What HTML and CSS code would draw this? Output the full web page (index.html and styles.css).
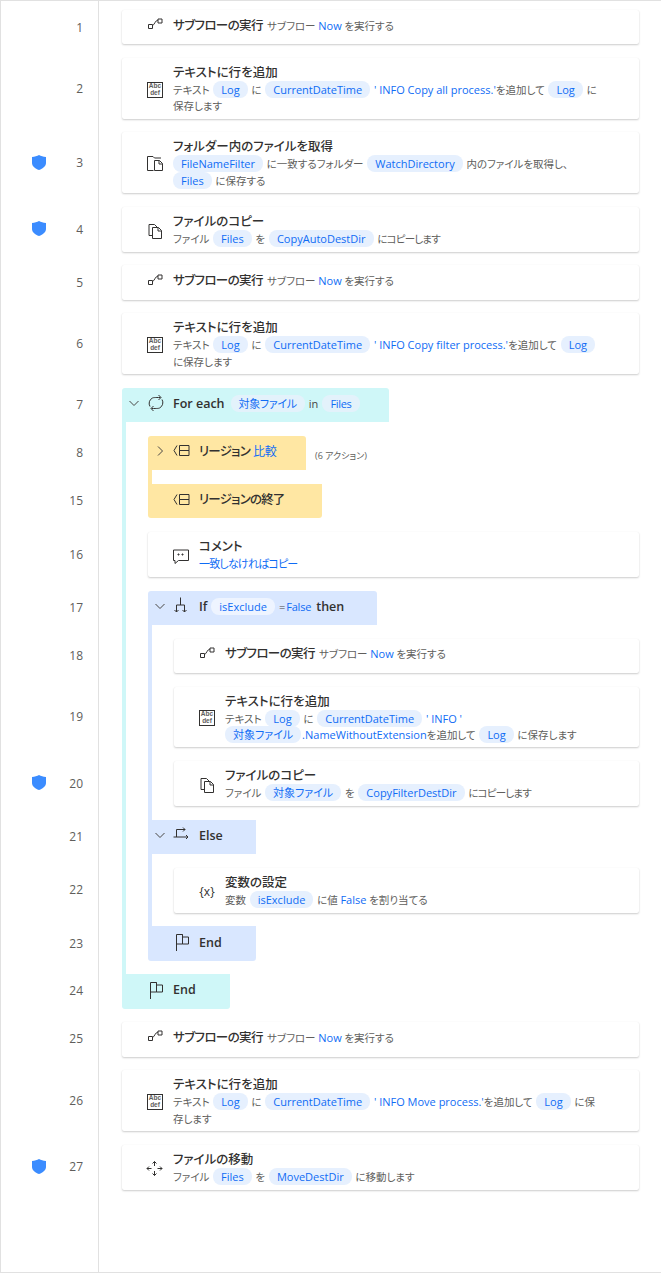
FILE: index.html
```html
<!DOCTYPE html>
<html lang="ja">
<head>
<meta charset="utf-8">
<title>Flow</title>
<link rel="stylesheet" href="styles.css">
</head>
<body>
<svg class="defs" aria-hidden="true">
  <symbol id="i-sub" viewBox="0 0 18 18"><path d="M2.500 9.500h4v4h-4zM12 4h4v4h-4zM6.500 10.500C8.500 10 9 5.500 12 5"/></symbol>
  <symbol id="i-folder" viewBox="0 0 18 18"><path d="M7.500 15.500H1.500V1.500H7L8.500 3H15M8.500 15.500V5.500h5l3 3v7zM13 5.500V9h3.500"/></symbol>
  <symbol id="i-copy" viewBox="0 0 18 18"><path d="M6.500 16.500h9v-8l-3-3h-6zM12 5.500V9h3.500M6.500 13.500H3v-11h5.500l3 3"/></symbol>
  <symbol id="i-loop" viewBox="0 0 18 18"><path d="M3 12.500a6 6 0 0 1 2.500-8.500c1-.5 2-.5 8-.5M11.500 1L14 3.500L11.500 6M15 5.500a6 6 0 0 1-2.500 8.500c-1 .5-2 .5-8 .5M6.500 12L4 14.500L6.500 17"/></symbol>
  <symbol id="i-region" viewBox="0 0 18 18"><path d="M4 3.500L1 8.500l3 5M6.500 3.500h9.500v5h-9.500zM6.500 8.500h9.500v5h-9.500z"/></symbol>
  <symbol id="i-comment" viewBox="0 0 18 18"><path d="M1.500 3h15v10.500h-10l-3.500 3v-3H1.500zM6 7h1v1H6zM10 7h1v1h-1z"/></symbol>
  <symbol id="i-if" viewBox="0 0 18 18"><path d="M7.500 .5V8M3.500 15V8h8v7M1.500 13l2 2l2-2M9.500 13l2 2l2-2"/></symbol>
  <symbol id="i-else" viewBox="0 0 18 18"><path d="M.5 11H15M13 9l2 2l-2 2M3.500 11V3.500H12M10 1.500l2 2l-2 2"/></symbol>
  <symbol id="i-end" viewBox="0 0 18 18"><path d="M3.500 18V1.500h6v2.500h6v7h-6M9.500 1.500v9.500h-6"/></symbol>
  <symbol id="i-move" viewBox="0 0 18 18"><path d="M8.500 1.500V6M6.500 3.500l2-2l2 2M8.500 11v4.500M6.500 13.500l2 2l2-2M1 8.500h4.500M3 6.500l-2 2l2 2M11.500 8.500H16M14 6.500l2 2l-2 2"/></symbol>
  <symbol id="i-shield" viewBox="0 0 14 15"><path d="M7 0c2 1.200 4.200 1.800 7 2v6c0 3-3 5.500-7 7c-4-1.500-7-4-7-7V2c2.800-.2 5-.8 7-2z"/></symbol>
  <symbol id="i-down" viewBox="0 0 12 12"><path d="M1.500 4L6 8.500L10.500 4"/></symbol>
  <symbol id="i-right" viewBox="0 0 12 12"><path d="M4 1.500L8.500 6L4 10.500"/></symbol>
</svg>

<div class="page">
  <aside class="gutter">
    <div class="cell">1</div>
    <div class="cell tall">2</div>
    <div class="cell tall"><svg class="shield"><use href="#i-shield"/></svg>3</div>
    <div class="cell mid"><svg class="shield"><use href="#i-shield"/></svg>4</div>
    <div class="cell">5</div>
    <div class="cell tall">6</div>
    <div class="cell">7</div>
    <div class="cell">8</div>
    <div class="cell">15</div>
    <div class="cell mid">16</div>
    <div class="cell">17</div>
    <div class="cell">18</div>
    <div class="cell tall">19</div>
    <div class="cell mid"><svg class="shield"><use href="#i-shield"/></svg>20</div>
    <div class="cell">21</div>
    <div class="cell mid">22</div>
    <div class="cell">23</div>
    <div class="cell">24</div>
    <div class="cell">25</div>
    <div class="cell tall">26</div>
    <div class="cell mid"><svg class="shield"><use href="#i-shield"/></svg>27</div>
  </aside>

  <main class="flow root">
    <div class="card one"><svg class="icon"><use href="#i-sub"/></svg><div class="line"><b class="title">サブフローの実行</b> <span class="desc">サブフロー <a>Now</a> を実行する</span></div></div>

    <div class="card"><div class="abc">Abc<br>def</div><div class="text"><div class="title">テキストに行を追加</div><div class="desc">テキスト <i>Log</i> に <i>CurrentDateTime</i> <a>' INFO Copy all process.'</a>を追加して <i>Log</i> に<br>保存します</div></div></div>

    <div class="card"><svg class="icon"><use href="#i-folder"/></svg><div class="text"><div class="title">フォルダー内のファイルを取得</div><div class="desc"><i class="first">FileNameFilter</i> に一致するフォルダー <i>WatchDirectory</i> 内のファイルを取得し、<br><i class="first">Files</i> に保存する</div></div></div>

    <div class="card mid"><svg class="icon"><use href="#i-copy"/></svg><div class="text"><div class="title">ファイルのコピー</div><div class="desc">ファイル <i>Files</i> を <i>CopyAutoDestDir</i> <span class="tight">にコピーします</span></div></div></div>

    <div class="card one"><svg class="icon"><use href="#i-sub"/></svg><div class="line"><b class="title">サブフローの実行</b> <span class="desc">サブフロー <a>Now</a> を実行する</span></div></div>

    <div class="card"><div class="abc">Abc<br>def</div><div class="text"><div class="title">テキストに行を追加</div><div class="desc">テキスト <i>Log</i> に <i>CurrentDateTime</i> <a>' INFO Copy filter process.'</a>を追加して <i>Log</i><br>に保存します</div></div></div>

    <section class="block cyan">
      <header class="head top w-foreach"><svg class="chev"><use href="#i-down"/></svg><svg class="icon"><use href="#i-loop"/></svg><b class="title">For each</b> <i class="alt">対象ファイル</i> <span class="plain">in</span> <i class="alt">Files</i></header>
      <div class="body flow">
        <section class="block yellow">
          <div class="region-row">
            <header class="head top w-region"><svg class="chev"><use href="#i-right"/></svg><svg class="icon"><use href="#i-region"/></svg><b class="title">リージョン</b> <a class="label">比較</a></header>
            <span class="note">(6 アクション)</span>
          </div>
          <div class="body short"></div>
          <header class="head bottom w-region-end"><svg class="icon"><use href="#i-region"/></svg><b class="title">リージョンの終了</b></header>
        </section>

        <div class="card mid"><svg class="icon"><use href="#i-comment"/></svg><div class="text"><div class="title">コメント</div><div class="desc"><a class="tight">一致しなければコピー</a></div></div></div>

        <section class="block blue">
          <header class="head top w-if"><svg class="chev"><use href="#i-down"/></svg><svg class="icon"><use href="#i-if"/></svg><b class="title">If</b> <i class="alt">isExclude</i> <span class="plain eq">=</span><a class="label">False</a> <b class="title then">then</b></header>
          <div class="body flow">
            <div class="card one"><svg class="icon"><use href="#i-sub"/></svg><div class="line"><b class="title">サブフローの実行</b> <span class="desc">サブフロー <a>Now</a> を実行する</span></div></div>

            <div class="card"><div class="abc">Abc<br>def</div><div class="text"><div class="title">テキストに行を追加</div><div class="desc">テキスト <i>Log</i> に <i>CurrentDateTime</i> <a>' INFO '</a><br><i class="first">対象ファイル</i><a>.NameWithoutExtension</a>を追加して <i>Log</i> に保存します</div></div></div>

            <div class="card mid"><svg class="icon"><use href="#i-copy"/></svg><div class="text"><div class="title">ファイルのコピー</div><div class="desc">ファイル <i>対象ファイル</i> を <i>CopyFilterDestDir</i> <span class="tight">にコピーします</span></div></div></div>
          </div>
          <header class="head w-end"><svg class="chev"><use href="#i-down"/></svg><svg class="icon"><use href="#i-else"/></svg><b class="title">Else</b></header>
          <div class="body flow">
            <div class="card mid"><div class="var">{x}</div><div class="text"><div class="title">変数の設定</div><div class="desc">変数 <i>isExclude</i> に値 <a>False</a> を割り当てる</div></div></div>
          </div>
          <header class="head bottom w-end"><svg class="icon"><use href="#i-end"/></svg><b class="title">End</b></header>
        </section>
      </div>
      <header class="head bottom w-end"><svg class="icon"><use href="#i-end"/></svg><b class="title">End</b></header>
    </section>

    <div class="card one"><svg class="icon"><use href="#i-sub"/></svg><div class="line"><b class="title">サブフローの実行</b> <span class="desc">サブフロー <a>Now</a> を実行する</span></div></div>

    <div class="card"><div class="abc">Abc<br>def</div><div class="text"><div class="title">テキストに行を追加</div><div class="desc">テキスト <i>Log</i> に <i>CurrentDateTime</i> <a>' INFO Move process.'</a>を追加して <i>Log</i> に保<br>存します</div></div></div>

    <div class="card mid"><svg class="icon"><use href="#i-move"/></svg><div class="text"><div class="title">ファイルの移動</div><div class="desc">ファイル <i>Files</i> を <i>MoveDestDir</i> に移動します</div></div></div>
  </main>
</div>
</body>
</html>
```
FILE: styles.css
```css
* { box-sizing: border-box; }
html, body { margin: 0; padding: 0; background: #fff; }
body {
  font-family: "Open Sans", "Noto Sans CJK JP", sans-serif;
  color: #323130;
  font-feature-settings: "palt";
}
.defs { display: none; }

.page {
  display: flex;
  width: 661px;
  height: 1273px;
  border: 1px solid #e1e1e1;
  border-right: 0;
  overflow: hidden;
}

/* number gutter */
.gutter {
  flex: 0 0 98px;
  border-right: 1px solid #e1e1e1;
  padding: 9px 15px 0 0;
  display: flex;
  flex-direction: column;
  gap: 13.55px;
  font-size: 12px;
  color: #605e5c;
}
.cell {
  height: 34.4px;
  display: flex;
  align-items: center;
  justify-content: flex-end;
  position: relative;
}
.cell.tall { height: 60.8px; }
.cell.mid { height: 45.2px; }
.shield {
  position: absolute;
  left: 31px;
  top: 50%;
  margin-top: -8px;
  width: 14px;
  height: 15px;
  fill: #3b8cff;
}

/* flow */
.flow { display: flex; flex-direction: column; gap: 13.55px; }
.root { flex: 1; min-width: 0; padding: 9px 22px 0 23px; }

.card {
  display: flex;
  align-items: center;
  background: #fff;
  border-radius: 2px;
  box-shadow: 0 1px 2px rgba(0, 0, 0, .2), 0 0 1px rgba(0, 0, 0, .06);
  padding: 5px 0 4px 24px;
  min-height: 34.4px;
}
.card.mid { min-height: 45.2px; }
.card.one { padding-top: 0; padding-bottom: 7px; }
.card .icon, .card .abc, .card .var { margin-top: 2px; }
.card.one .icon { margin-top: 1px; }

.icon {
  flex: none;
  width: 18px;
  height: 18px;
  margin-right: 9px;
  fill: none;
  stroke: #323130;
  stroke-width: 1;
}
.abc {
  flex: none;
  width: 16px;
  height: 16px;
  margin: 0 10px 0 1px;
  border: 1px solid #323130;
  font: 700 6.5px/6.7px "Liberation Sans", sans-serif;
  text-align: center;
  color: #605e5c;
}
.var {
  flex: none;
  width: 18px;
  margin-right: 9px;
  font-size: 12px;
  line-height: 16px;
  text-align: center;
  white-space: nowrap;
  font-weight: 400;
}
.text { min-width: 0; white-space: nowrap; }
.line { white-space: nowrap; }

.title { font-size: 12.5px; font-weight: 500; line-height: 19px; color: #323130; }
.one .title { letter-spacing: -.6px; }
.desc { font-size: 10.5px; line-height: 16.4px; color: #605e5c; }
.desc a, .label { color: #0f6cf5; }
.desc a { font-size: 11px; }
.tight { letter-spacing: -.8px; }

/* variable chip */
.desc i, .alt {
  font-style: normal;
  font-size: 11px;
  color: #0f6cf5;
  background: #e6f0fe;
  border-radius: 8px;
  padding: 1px 8px;
  margin: 0 1px;
}
.desc i.first { margin-left: 0; }

/* blocks */
.block { display: flex; flex-direction: column; }
.head {
  display: flex;
  align-items: center;
  height: 34.4px;
  padding: 0 0 3px 25px;
  white-space: nowrap;
}
.head.top { border-radius: 3px 3px 0 0; }
.head.bottom { border-radius: 0 0 3px 3px; }
.head .icon { margin-right: 8px; }
.head .title { margin-right: 3px; font-weight: 600; }
.cyan > .head .title { margin-right: 5px; }
.yellow .title { letter-spacing: -.8px; font-weight: 500; }
.chev {
  flex: none;
  width: 12px;
  height: 12px;
  margin-left: -19px;
  margin-right: 7px;
  fill: none;
  stroke: #484644;
  stroke-width: 1;
}
.alt { background: rgba(255, 255, 255, .55); margin: 0 4px 0 1px; line-height: 15px; }
.cyan > .head .alt { background: #e3f2fb; letter-spacing: -.3px; }
.plain { font-size: 11px; color: #484644; margin: 0 4px 0 0; }
.cyan > .head .plain { margin-right: 3px; }
.plain.eq { margin-right: 1px; }
.label { font-size: 12px; letter-spacing: -.2px; }
.blue .label { font-size: 11px; }
.then { margin-left: 5px; }

.w-foreach { width: 267px; }
.w-region { width: 158px; }
.w-region-end { width: 174px; }
.w-if { width: 229px; }
.w-end { width: 108px; }

.body {
  border-left: 4px solid;
  padding: 13.55px 0 13.55px 22px;
}
.body.short { height: 14px; padding: 0; width: 4px; }

.cyan > .head { background: #cff7f8; }
.cyan > .body { border-color: #cff7f8; }
.yellow .head { background: #ffe7a3; }
.yellow > .body { border-color: #ffe7a3; }
.blue > .head { background: #d9e7ff; }
.blue > .body { border-color: #d9e7ff; }

.region-row { display: flex; align-items: center; }
.note { font-size: 9px; color: #605e5c; margin-left: 9px; position: relative; top: 3px; }
```
